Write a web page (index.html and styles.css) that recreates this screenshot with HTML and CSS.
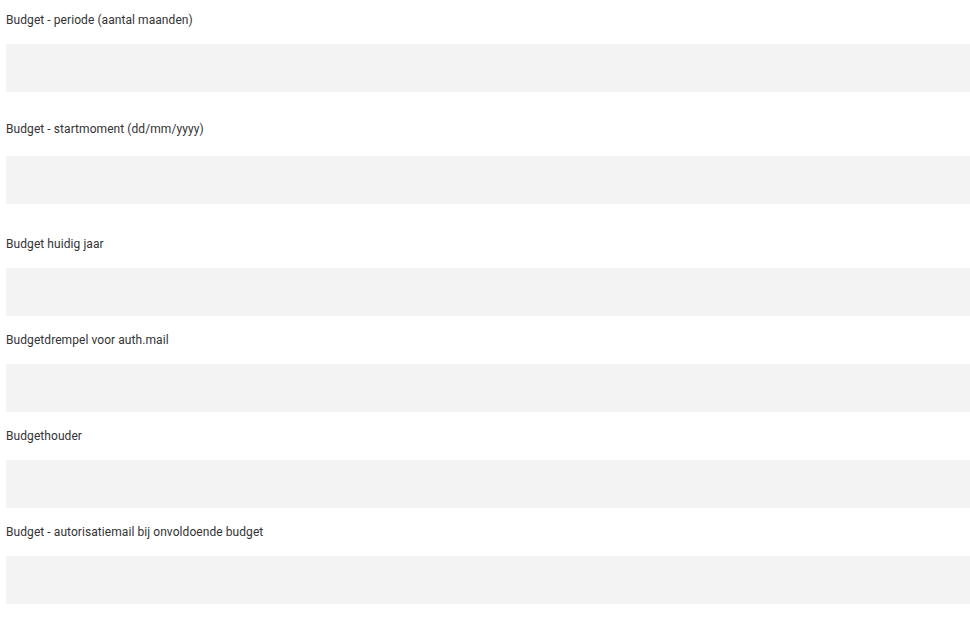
FILE: index.html
```html
<html>
  <head>
    <title>Budget</title>
    <link rel="stylesheet" href="styles.css">
  </head>

  <body>
    <form class="budget-form">
      <div class="field">
        <label for="periode">Budget - periode (aantal maanden)</label>
        <input type="text" id="periode">
        <div class="hint hint--short"></div>
      </div>
      <div class="field field--date">
        <label for="startmoment">Budget - startmoment (dd/mm/yyyy)</label>
        <input type="text" id="startmoment">
        <div class="hint"></div>
      </div>
      <div class="field">
        <label for="huidig">Budget huidig jaar</label>
        <input type="text" id="huidig">
      </div>
      <div class="field">
        <label for="drempel">Budgetdrempel voor auth.mail</label>
        <input type="text" id="drempel">
      </div>
      <div class="field">
        <label for="houder">Budgethouder</label>
        <input type="text" id="houder">
      </div>
      <div class="field">
        <label for="autorisatie">Budget - autorisatiemail bij onvoldoende budget</label>
        <input type="text" id="autorisatie">
      </div>
    </form>
  </body>
</html>
```

FILE: styles.css
```css
body {
  margin: 0;
  background-color: #FFFFFF;
  color: #333333;
  font-family: Roboto, "Liberation Sans", sans-serif;
}
.budget-form {
  display: flex;
  flex-direction: column;
  gap: 16px;
  padding: 12px 0 0 6px;
}
.field {
  display: flex;
  flex-direction: column;
}
.field label {
  font-size: 12px;
  line-height: 16px;
  letter-spacing: 0.07px;
  margin-bottom: 16px;
}
.field--date label {
  margin-bottom: 19px;
}
.field input[type=text] {
  box-sizing: border-box;
  width: 100%;
  height: 48px;
  margin: 0;
  padding: 0 12px;
  border: none;
  background-color: #F3F3F3;
  font: inherit;
}
.hint {
  height: 16px;
}
.hint--short {
  height: 13px;
}
```
